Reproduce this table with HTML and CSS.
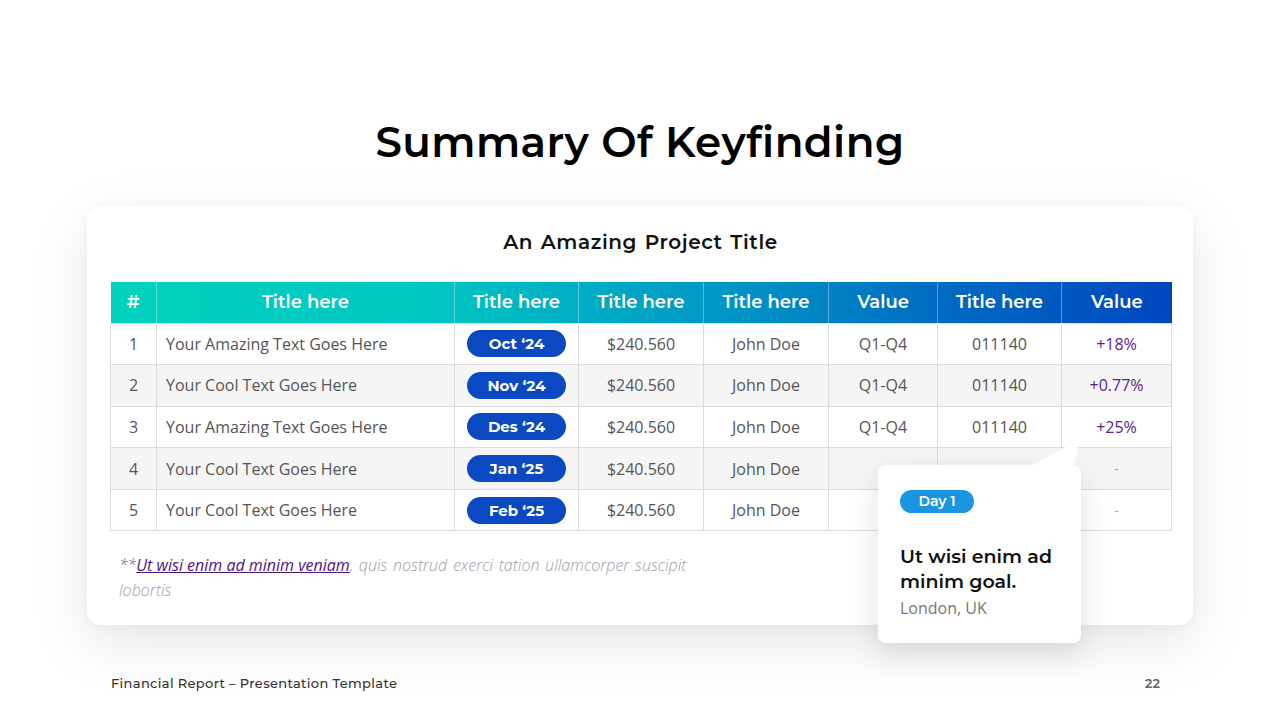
FILE: index.html
```html
<!DOCTYPE html>
<html lang="en">
<head>
<meta charset="utf-8">
<title>Summary Of Keyfinding</title>
<link rel="stylesheet" href="styles.css">
</head>
<body>
<div class="slide">
  <h1 class="title">Summary Of Keyfinding</h1>
  <div class="card">
    <h2 class="subtitle">An Amazing Project Title</h2>
    <table class="data">
      <thead>
        <tr>
          <th class="c-num">#</th>
          <th class="c-text">Title here</th>
          <th class="c-date">Title here</th>
          <th class="c-price">Title here</th>
          <th class="c-name">Title here</th>
          <th class="c-q">Value</th>
          <th class="c-code">Title here</th>
          <th class="c-val">Value</th>
        </tr>
      </thead>
      <tbody>
        <tr>
          <td>1</td><td class="left">Your Amazing Text Goes Here</td>
          <td><span class="pill">Oct ‘24</span></td>
          <td>$240.560</td><td>John Doe</td><td>Q1-Q4</td><td>011140</td><td class="val">+18%</td>
        </tr>
        <tr>
          <td>2</td><td class="left">Your Cool Text Goes Here</td>
          <td><span class="pill">Nov ‘24</span></td>
          <td>$240.560</td><td>John Doe</td><td>Q1-Q4</td><td>011140</td><td class="val">+0.77%</td>
        </tr>
        <tr>
          <td>3</td><td class="left">Your Amazing Text Goes Here</td>
          <td><span class="pill">Des ‘24</span></td>
          <td>$240.560</td><td>John Doe</td><td>Q1-Q4</td><td>011140</td><td class="val">+25%</td>
        </tr>
        <tr>
          <td>4</td><td class="left">Your Cool Text Goes Here</td>
          <td><span class="pill">Jan ‘25</span></td>
          <td>$240.560</td><td>John Doe</td><td></td><td></td><td class="dash">-</td>
        </tr>
        <tr>
          <td>5</td><td class="left">Your Cool Text Goes Here</td>
          <td><span class="pill">Feb ‘25</span></td>
          <td>$240.560</td><td>John Doe</td><td></td><td></td><td class="dash">-</td>
        </tr>
      </tbody>
    </table>
    <p class="note">**<span class="link">Ut wisi enim ad minim veniam</span><span class="rest">, quis nostrud exerci tation ullamcorper suscipit lobortis</span></p>

    <div class="tip">
      <svg class="tail" width="60" height="30" viewBox="0 0 60 30"><polygon points="0,28 49,2 44,28" fill="#ffffff"/></svg>
      <span class="day">Day 1</span>
      <p class="tip-title">Ut wisi enim ad minim goal.</p>
      <p class="tip-sub">London, UK</p>
    </div>
  </div>
  <div class="footer">
    <span class="foot-left">Financial Report – Presentation Template</span>
    <span class="foot-num">22</span>
  </div>
</div>
</body>
</html>
```

FILE: styles.css
```css
* { box-sizing: border-box; }
html, body { margin: 0; padding: 0; }
body {
  width: 1280px;
  height: 720px;
  background: #ffffff;
  font-family: "Open Sans", "Noto Sans", sans-serif;
  overflow: hidden;
}
.slide {
  width: 1280px;
  height: 720px;
  padding: 112px 87px 0 87px;
  display: flex;
  flex-direction: column;
}
.title {
  margin: 0;
  height: 60px;
  line-height: 60px;
  text-align: center;
  font-family: "Montserrat", "Inter", sans-serif;
  font-weight: 600;
  font-size: 42px;
  color: #000000;
  letter-spacing: 0.4px;
}
.card {
  position: relative;
  margin-top: 34px;
  width: 1106px;
  height: 419px;
  background: #ffffff;
  border-radius: 14px;
  box-shadow: 0 18px 60px rgba(0, 0, 0, 0.1), 0 2px 12px rgba(0, 0, 0, 0.03);
  padding: 24px 22px 0 23px;
}
.subtitle {
  margin: 0;
  height: 24px;
  line-height: 24px;
  text-align: center;
  font-family: "Montserrat", "Inter", sans-serif;
  font-weight: 600;
  font-size: 20px;
  color: #111111;
  letter-spacing: 0.6px;
  word-spacing: 1.5px;
}
.data {
  margin-top: 28px;
  width: 1061px;
  border-collapse: collapse;
  table-layout: fixed;
}
.data th {
  height: 41px;
  padding: 0;
  color: #ffffff;
  font-family: "Montserrat", "Inter", sans-serif;
  font-weight: 600;
  font-size: 18px;
  text-align: center;
  border-left: 1px solid rgba(255, 255, 255, 0.35);
}
.data th:first-child { border-left: none; }
.data thead tr {
  background: linear-gradient(90deg, #00d3bd 0%, #00c6c2 30%, #0096c6 58%, #0068c2 80%, #0046bf 100%);
}
.c-num { width: 46px; }
.c-text { width: 298px; }
.c-date { width: 124px; }
.c-price { width: 125px; }
.c-name { width: 125px; }
.c-q { width: 109px; }
.c-code { width: 124px; }
.c-val { width: 110px; }
.data td {
  height: 41.6px;
  padding: 0;
  text-align: center;
  font-size: 16px;
  color: #555555;
  border: 1px solid #dcdcdc;
}
.data tbody tr:nth-child(even) td { background: #f5f5f5; }
.data td.left { text-align: left; padding-left: 9px; }
.data td.val { color: #5b1d8c; }
.data td.dash { color: #aaaaaa; font-size: 14px; }
.pill {
  display: inline-block;
  width: 99px;
  height: 27px;
  line-height: 27px;
  border-radius: 14px;
  background: #0a49c2;
  color: #ffffff;
  font-family: "Montserrat", "Inter", sans-serif;
  font-weight: 700;
  font-size: 15px;
  vertical-align: middle;
}
.note {
  margin: 22px 0 0 9px;
  width: 585px;
  font-size: 16px;
  line-height: 25px;
  font-style: italic;
  font-weight: 300;
  color: #666666;
}
.link {
  color: #4d1480;
  text-decoration: underline;
  font-weight: 400;
}
.rest {
  color: #9aa0a8;
  word-spacing: 1.5px;
}
.tip {
  position: absolute;
  left: 791px;
  top: 259px;
  width: 203px;
  height: 178px;
  background: #ffffff;
  border-radius: 8px;
  box-shadow: 0 10px 30px rgba(0, 0, 0, 0.12);
  padding: 24px 20px 0 22px;
}
.tail {
  position: absolute;
  left: 152px;
  top: -27px;
}
.day {
  display: inline-block;
  height: 23px;
  line-height: 23px;
  width: 74px;
  text-align: center;
  border-radius: 12px;
  background: #1996df;
  color: #ffffff;
  font-family: "Montserrat", "Inter", sans-serif;
  font-weight: 600;
  font-size: 14px;
}
.tip-title {
  margin: 31px 0 0 0;
  font-family: "Montserrat", "Inter", sans-serif;
  font-weight: 600;
  font-size: 19px;
  line-height: 25px;
  color: #111111;
}
.tip-sub {
  margin: 3px 0 0 0;
  font-size: 16px;
  line-height: 22px;
  color: #777777;
}
.footer {
  margin-top: 50px;
  display: flex;
  justify-content: space-between;
  align-items: center;
  padding: 0 33px 0 24px;
  font-family: "Montserrat", "Inter", sans-serif;
}
.foot-left {
  font-size: 13px;
  font-weight: 500;
  color: #333333;
  letter-spacing: 0.35px;
}
.foot-num {
  font-size: 13px;
  font-weight: 600;
  color: #666666;
}
```
